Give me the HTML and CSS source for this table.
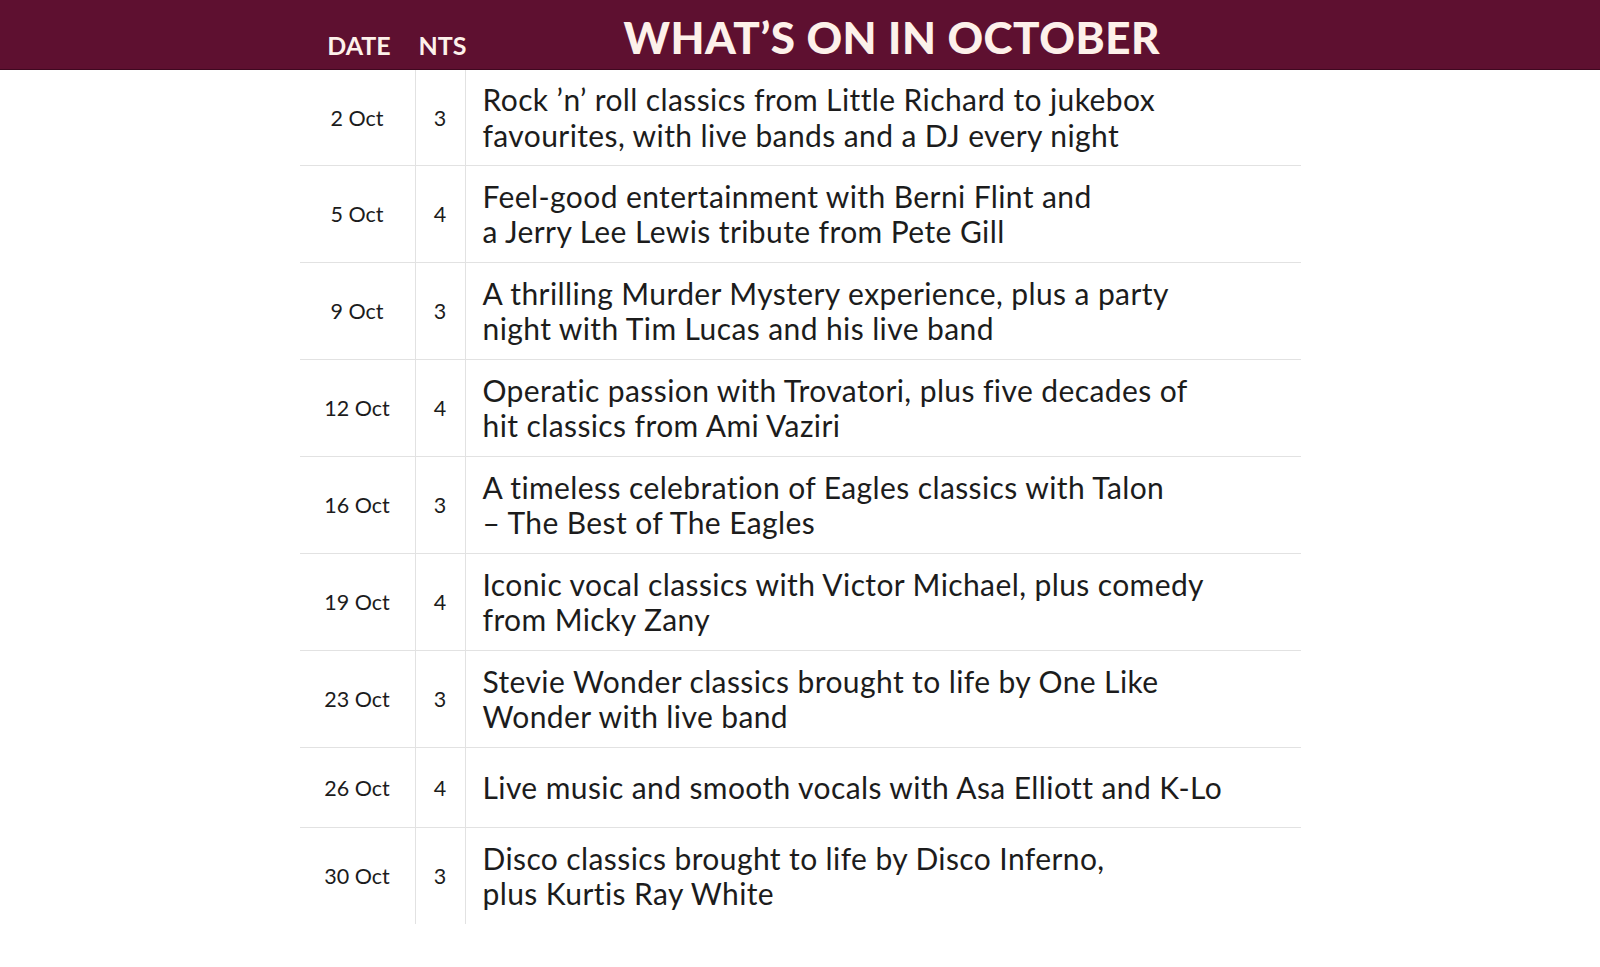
FILE: index.html
```html
<!DOCTYPE html>
<html lang="en">
<head>
<meta charset="utf-8">
<title>What’s on in October</title>
<link rel="stylesheet" href="styles.css">
</head>
<body>
<header class="bar">
  <div class="bar-inner">
    <div class="col-head">DATE</div>
    <div class="col-head">NTS</div>
    <h1 class="title">WHAT’S ON IN OCTOBER</h1>
  </div>
</header>
<main class="table">
  <div class="row"><div class="date">2 Oct</div><div class="nts">3</div><div class="desc">Rock ’n’ roll classics from Little Richard to jukebox<br>favourites, with live bands and a DJ every night</div></div>
  <div class="row"><div class="date">5 Oct</div><div class="nts">4</div><div class="desc">Feel-good entertainment with Berni Flint and<br>a Jerry Lee Lewis tribute from Pete Gill</div></div>
  <div class="row"><div class="date">9 Oct</div><div class="nts">3</div><div class="desc">A thrilling Murder Mystery experience, plus a party<br>night with Tim Lucas and his live band</div></div>
  <div class="row"><div class="date">12 Oct</div><div class="nts">4</div><div class="desc">Operatic passion with Trovatori, plus five decades of<br>hit classics from Ami Vaziri</div></div>
  <div class="row"><div class="date">16 Oct</div><div class="nts">3</div><div class="desc">A timeless celebration of Eagles classics with Talon<br>– The Best of The Eagles</div></div>
  <div class="row"><div class="date">19 Oct</div><div class="nts">4</div><div class="desc">Iconic vocal classics with Victor Michael, plus comedy<br>from Micky Zany</div></div>
  <div class="row"><div class="date">23 Oct</div><div class="nts">3</div><div class="desc">Stevie Wonder classics brought to life by One Like<br>Wonder with live band</div></div>
  <div class="row short"><div class="date">26 Oct</div><div class="nts">4</div><div class="desc">Live music and smooth vocals with Asa Elliott and K-Lo</div></div>
  <div class="row last"><div class="date">30 Oct</div><div class="nts">3</div><div class="desc">Disco classics brought to life by Disco Inferno,<br>plus Kurtis Ray White</div></div>
</main>
</body>
</html>
```
FILE: styles.css
```css
html, body {
  margin: 0;
  padding: 0;
  background: #ffffff;
}

body {
  font-family: Lato, "Open Sans", "Liberation Sans", sans-serif;
  color: #1c1c1c;
}

.bar {
  background: #5e1030;
  height: 69px;
  border-bottom: 1px solid #3f0820;
}

.bar-inner {
  width: 1001px;
  margin: 0 auto;
  height: 100%;
  display: grid;
  grid-template-columns: 116px 50px 1fr;
  align-items: end;
  color: #fdf1ea;
}

.col-head {
  font-weight: 700;
  font-size: 25px;
  text-align: center;
  line-height: 1;
  padding-bottom: 11px;
  padding-left: 3px;
}

.title {
  margin: 0;
  font-weight: 900;
  font-size: 44px;
  line-height: 1;
  padding-left: 158px;
  padding-bottom: 10px;
  letter-spacing: 0.5px;
}

.table {
  width: 1001px;
  margin: 0 auto;
}

.row {
  display: grid;
  grid-template-columns: 116px 50px 1fr;
  height: 97px;
  border-bottom: 1.5px solid #e2e2e2;
  box-sizing: border-box;
}

.row:first-child {
  height: 96px;
}

.row.short {
  height: 80px;
}

.row.last {
  border-bottom: none;
  height: 96px;
}

.date, .nts, .desc {
  display: flex;
  align-items: center;
}

.date {
  justify-content: center;
  font-size: 21.5px;
  border-right: 1.5px solid #e2e2e2;
}

.nts {
  justify-content: center;
  font-size: 21.5px;
  border-right: 1.5px solid #e2e2e2;
}

.desc {
  font-size: 30px;
  line-height: 35.5px;
  letter-spacing: 0.4px;
  padding-left: 17px;
}
```
